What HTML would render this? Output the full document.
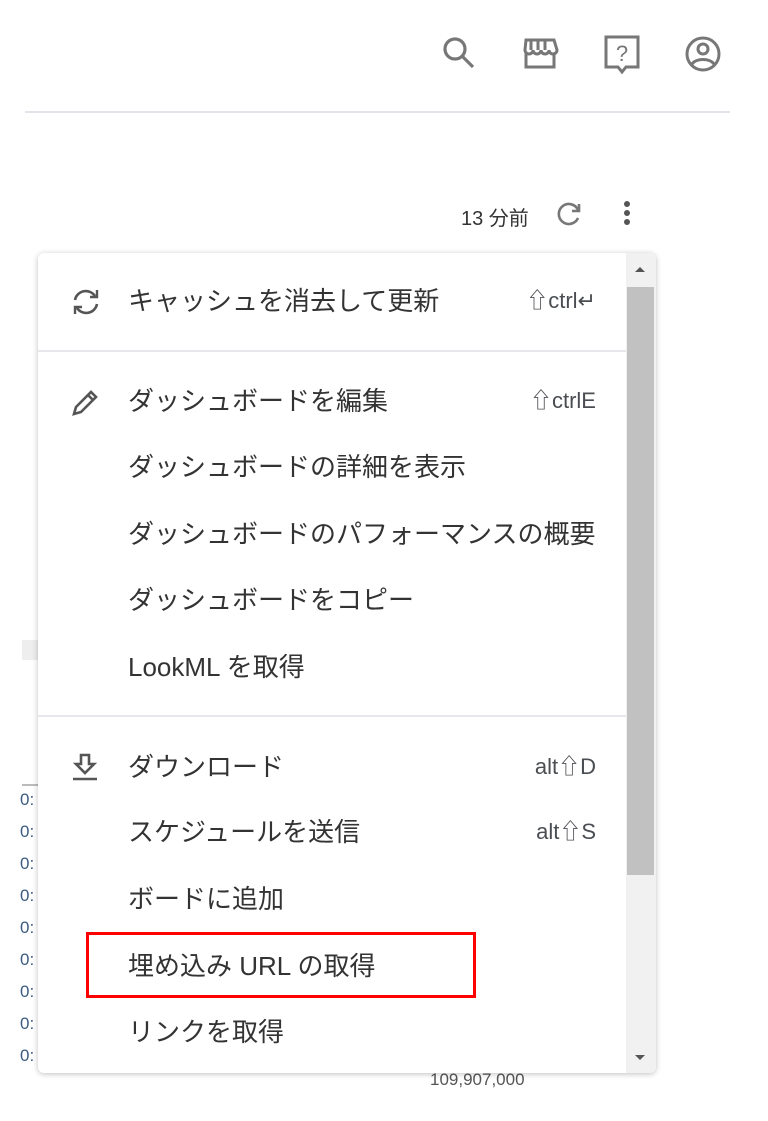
<!DOCTYPE html>
<html><head><meta charset="utf-8"><style>
body{margin:0;width:768px;height:1121px;background:#fff;position:relative;overflow:hidden;font-family:"Liberation Sans","Noto Sans CJK JP",sans-serif;color:#333}
.a{position:absolute}
.menu{left:38px;top:253px;width:618px;height:820px;background:#fff;border-radius:6px;box-shadow:0 1px 6px rgba(0,0,0,.25);overflow:hidden}
.it{position:absolute;left:90px;font-size:26px;line-height:30px;white-space:nowrap;color:#333}
.sc{position:absolute;right:60px;font-size:22px;line-height:30px;color:#4a4d52}
.hr{position:absolute;left:0;width:588px;height:2px;background:#e6e8eb}
.ic{position:absolute;left:32px}
.bg{font-size:17px;color:#3c5a80;left:20px}
</style></head><body>
<svg class="a" style="left:440px;top:34px" width="38" height="38" viewBox="0 0 38 38" fill="none" stroke="#777" stroke-width="3.2"><circle cx="15" cy="15" r="10"/><path d="M22 22l11 11"/></svg>
<svg class="a" style="left:520px;top:36px" width="40" height="36" viewBox="0 0 40 36" fill="none" stroke="#777" stroke-width="3"><path d="M6 4h28l3 10a4 4 0 0 1-8 0 4 4 0 0 1-8 0 4 4 0 0 1-8 0 4 4 0 0 1-8 0z"/><path d="M11 4v10M18 4v10M25 4v10"/><path d="M6 17v14h28V17"/></svg>
<svg class="a" style="left:602px;top:34px" width="40" height="42" viewBox="0 0 40 42" fill="none" stroke="#777" stroke-width="3"><path d="M4 3h32v30H24l-4 5-4-5H4z"/><text x="20" y="27" font-size="22" fill="#777" stroke="none" text-anchor="middle" font-family="Liberation Sans">?</text></svg>
<svg class="a" style="left:684px;top:35px" width="38" height="38" viewBox="0 0 38 38" fill="none" stroke="#777" stroke-width="3"><circle cx="19" cy="19" r="16"/><circle cx="19" cy="14" r="5"/><path d="M8 29c4-6 18-6 22 0"/></svg>
<div class="a" style="left:25px;top:111px;width:705px;height:2px;background:#e3e3ea"></div>
<div class="a" style="left:461px;top:202px;font-size:20px;color:#333">13 分前</div>
<svg class="a" style="left:556px;top:200px" width="28" height="28" viewBox="0 0 28 28" fill="none" stroke="#777" stroke-width="2.6"><path d="M22 10a10 10 0 1 0 0 8"/><path d="M23 4v7h-7" /></svg>
<div class="a" style="left:624px;top:201px;width:6px;height:6px;border-radius:3px;background:#555;box-shadow:0 9px 0 #555,0 18px 0 #555"></div>
<div class="a" style="left:22px;top:640px;width:16px;height:20px;background:#eee"></div>
<div class="a" style="left:22px;top:784px;width:16px;height:2px;background:#bbb"></div>
<div class="a bg" style="top:790px">0:</div><div class="a bg" style="top:822px">0:</div><div class="a bg" style="top:854px">0:</div><div class="a bg" style="top:886px">0:</div><div class="a bg" style="top:918px">0:</div><div class="a bg" style="top:950px">0:</div><div class="a bg" style="top:982px">0:</div><div class="a bg" style="top:1014px">0:</div><div class="a bg" style="top:1046px">0:</div>
<div class="a" style="left:430px;top:1070px;font-size:17px;color:#555">109,907,000</div>
<div class="a menu">
 <svg class="ic" style="top:34px" width="32" height="30" viewBox="0 0 32 30" fill="none" stroke="#555" stroke-width="2.6"><path d="M5 13a11 11 0 0 1 20-4"/><path d="M27 3v7h-7" stroke-width="2.4"/><path d="M27 17a11 11 0 0 1-20 4"/><path d="M5 27v-7h7" stroke-width="2.4"/></svg>
 <div class="it" style="top:33px">キャッシュを消去して更新</div><div class="sc" style="top:33px">⇧ctrl↵</div>
 <div class="hr" style="top:97px"></div>
 <svg class="ic" style="top:133px" width="32" height="32" viewBox="0 0 32 32" fill="none" stroke="#555" stroke-width="2.6"><path d="M4 28l2-7L21 6l5 5-15 15z"/><path d="M18 9l5 5"/></svg>
 <div class="it" style="top:133px">ダッシュボードを編集</div><div class="sc" style="top:133px">⇧ctrlE</div>
 <div class="it" style="top:199px">ダッシュボードの詳細を表示</div>
 <div class="it" style="top:266px">ダッシュボードのパフォーマンスの概要</div>
 <div class="it" style="top:332px">ダッシュボードをコピー</div>
 <div class="it" style="top:399px">LookML を取得</div>
 <div class="hr" style="top:462px"></div>
 <svg class="ic" style="top:499px" width="30" height="30" viewBox="0 0 30 30" fill="none" stroke="#555" stroke-width="2.6"><path d="M11 3h8v9h5l-9 9-9-9h5z"/><path d="M3 27h24"/></svg>
 <div class="it" style="top:499px">ダウンロード</div><div class="sc" style="top:499px">alt⇧D</div>
 <div class="it" style="top:564px">スケジュールを送信</div><div class="sc" style="top:564px">alt⇧S</div>
 <div class="it" style="top:631px">ボードに追加</div>
 <div class="it" style="top:698px">埋め込み URL の取得</div>
 <div class="it" style="top:764px">リンクを取得</div>
 <div class="a" style="left:588px;top:0;width:30px;height:820px;background:#f1f1f1"></div>
 <div class="a" style="left:589px;top:34px;width:27px;height:588px;background:#c1c1c1"></div>
 <div class="a" style="left:597px;top:14px;width:0;height:0;border:5px solid transparent;border-bottom-color:#555;border-top:0"></div>
 <div class="a" style="left:597px;top:802px;width:0;height:0;border:5px solid transparent;border-top-color:#555;border-bottom:0"></div>
</div>
<div class="a" style="left:86px;top:932px;width:384px;height:60px;border:3px solid #f00"></div>
</body></html>
